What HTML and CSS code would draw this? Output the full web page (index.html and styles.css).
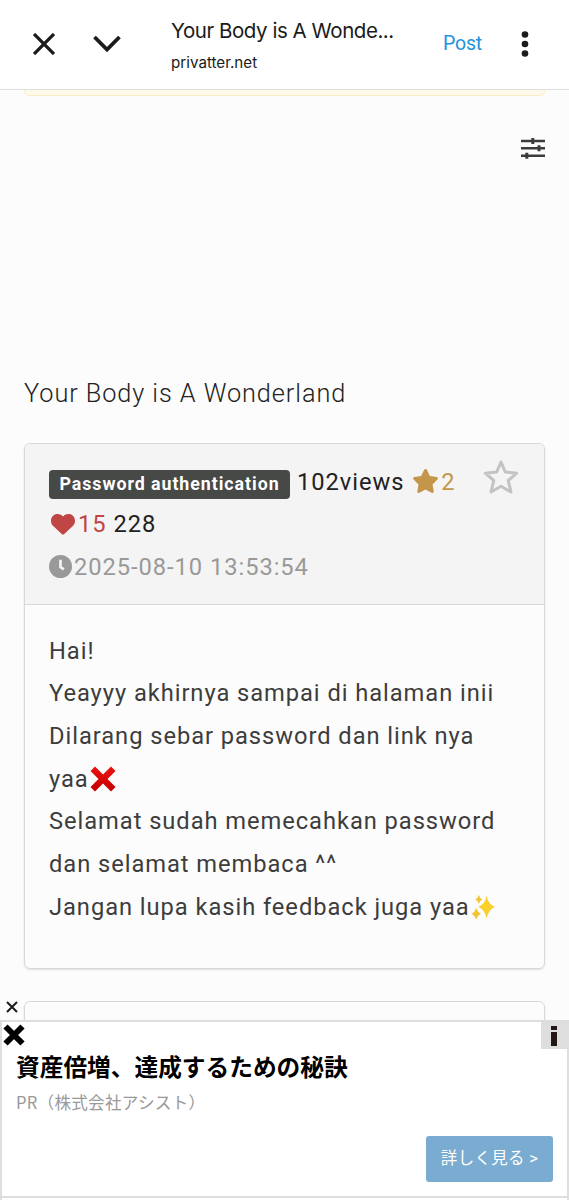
FILE: index.html
```
<!DOCTYPE html>
<html lang="id">
<head>
  <meta charset="UTF-8" />
  <title>Your Body is A Wonderland - privatter.net</title>
  <link rel="stylesheet" href="styles.css">
</head>
<body>
  <header class="browser-bar">
    <svg class="close" viewBox="0 0 22 22"><path d="M1 1L21 21M21 1L1 21" /></svg>
    <svg class="down" viewBox="0 0 28 18"><path d="M1.5 2L14 14.5L26.500 2" /></svg>
    <div class="page-info">
      <div class="page-title">Your Body is A Wonde...</div>
      <div class="page-url">privatter.net</div>
    </div>
    <span class="post">Post</span>
    <svg class="more" viewBox="0 0 8 26"><circle cx="4" cy="3.500" r="3.300" /><circle cx="4" cy="13" r="3.300" /><circle cx="4" cy="22.500" r="3.300" /></svg>
  </header>

  <main>
    <div class="notice"></div>
    <div class="tools">
      <svg class="sliders" viewBox="0 0 24 20"><path d="M0 3H24M0 10.300H24M0 17.700H24" /><path class="knob" d="M11.800 0V6M18 7.300V13.300M5.800 14.700V20.700" /></svg>
    </div>
    <h1>Your Body is A Wonderland</h1>

    <div class="card">
      <div class="card-header">
        <svg class="fav" viewBox="0 0 36 36"><path d="M18 3L22.300 13L33.700 14.200L25.200 21.500L28 33L18 27.300L8 33L10.800 21.500L2.300 14.200L13.700 13Z" /></svg>
        <div class="row"><span class="label">Password authentication</span><span class="views">102views</span><span class="stars"><svg class="star" viewBox="0 0 576 512"><path d="M316.900 18C311.600 7 300.400 0 288.100 0s-23.400 7-28.800 18L195 150.300 51.400 171.500c-12 1.800-22 10.200-25.700 21.700s-.7 24.200 7.900 32.700L137.800 329 113.200 474.700c-2 12 3 24.200 12.900 31.300s23 8 33.800 2.300l128.300-68.500 128.300 68.500c10.800 5.700 23.900 4.900 33.800-2.300s14.900-19.300 12.900-31.300L438.500 329 542.700 225.900c8.600-8.500 11.700-21.200 7.900-32.700s-13.700-19.900-25.700-21.700L381.200 150.300z" /></svg>2</span></div>
        <div class="row"><span class="likes"><svg class="heart" viewBox="0 0 512 512"><path d="M47.600 300.400L228.300 469.100c7.500 7 17.400 10.900 27.700 10.900s20.200-3.900 27.700-10.900L464.400 300.400c30.400-28.300 47.600-68 47.600-109.500v-5.800c0-69.900-50.500-129.500-119.400-141C347 36.500 300.600 51.400 268 84L256 96 244 84c-32.600-32.600-79-47.500-124.600-39.900C50.500 55.600 0 115.200 0 185.100v5.800c0 41.500 17.200 81.200 47.600 109.500z" /></svg>15</span><span>228</span></div>
        <div class="row date"><svg class="clock" viewBox="0 0 24 24"><circle cx="12" cy="12" r="12" /><path d="M12 5V12.500L15.500 15" /></svg>2025-08-10 13:53:54</div>
      </div>
      <div class="card-body">
        Hai!<br>
        Yeayyy akhirnya sampai di halaman inii<br>
        Dilarang sebar password dan link nya<br>
        yaa<svg class="emoji cross" viewBox="0 0 28 28"><defs><linearGradient id="red" x2="0" y2="1"><stop stop-color="#ee1010" /><stop offset="1" stop-color="#c20000" /></linearGradient></defs><path fill="url(#red)" d="M6 1.500L14 9.500L22 1.500L26.500 6L18.500 14L26.500 22L22 26.500L14 18.500L6 26.500L1.500 22L9.500 14L1.500 6Z" /></svg><br>
        Selamat sudah memecahkan password<br>
        dan selamat membaca ^^<br>
        Jangan lupa kasih feedback juga yaa<svg class="emoji sparkles" viewBox="0 0 24 24"><path fill="#fad02c" d="M15 1Q16.800 9.300 23 11.500Q16.800 13.700 15 22.500Q13.200 13.700 7 11.500Q13.200 9.300 15 1Z" /><path fill="#f3c433" d="M7.500 0Q8.500 3.300 11 4.300Q8.500 5.300 7.500 8.500Q6.500 5.300 4 4.300Q6.500 3.300 7.500 0ZM5 12.500Q6.400 16.600 9.500 18Q6.400 19.400 5 23.500Q3.600 19.400 .5 18Q3.600 16.600 5 12.500Z" /></svg>
      </div>
    </div>
    <div class="card next"></div>
  </main>

  <svg class="ad-dismiss" viewBox="0 0 12 12"><path d="M1 1L11 11M11 1L1 11" /></svg>
  <aside class="ad">
    <svg class="ad-close" viewBox="0 0 22 22"><path d="M2.500 2.500L19.500 19.500M19.500 2.500L2.500 19.500" /></svg>
    <div class="ad-info"><svg viewBox="0 0 6 20"><path d="M0 0H6V4H0ZM0 6H6V20H0Z" /></svg></div>
    <div class="ad-title">資産倍増、達成するための秘訣</div>
    <div class="ad-pr">PR（株式会社アシスト）</div>
    <a class="ad-button">詳しく見る &gt;</a>
  </aside>
</body>
</html>
```
FILE: styles.css
```
* {
  box-sizing: border-box;
}
body {
  margin: 0;
  height: 1200px;
  overflow: hidden;
  background: #fcfcfc;
  color: #222;
  font-family: Roboto, "Noto Sans CJK JP", sans-serif;
}
svg {
  display: block;
  flex: none;
}
.browser-bar {
  display: flex;
  align-items: center;
  height: 90px;
  padding: 0 40px 1px 33px;
  background: #fff;
  border-bottom: 1px solid #dcdfe0;
}
.close, .down, .ad-dismiss, .ad-close {
  fill: none;
  stroke: #1b1b1b;
  stroke-width: 3.3;
}
.close {
  width: 22px;
  height: 22px;
}
.down {
  width: 28px;
  height: 18px;
  margin-left: 38px;
  stroke-width: 3.8;
}
.page-info {
  width: 272px;
  margin-left: 50px;
  font-family: Inter, sans-serif;
  color: #1b1b1b;
  white-space: nowrap;
}
.page-title {
  font-size: 20.5px;
  line-height: 32px;
  letter-spacing: -0.45px;
}
.page-url {
  font-size: 15.2px;
  line-height: 20px;
  margin-top: 6px;
}
.post {
  width: 77px;
  color: #2492dc;
  font-size: 19.5px;
  letter-spacing: -0.2px;
  position: relative;
  top: -1px;
}
.more {
  width: 8px;
  height: 26px;
  margin-left: 1px;
  fill: #1b1b1b;
}
main {
  padding: 0 24px;
}
.notice {
  height: 6px;
  background: #fff9ea;
  border: 1px solid #fbecc8;
  border-top: 0;
  border-radius: 0 0 5px 5px;
}
.tools {
  display: flex;
  justify-content: flex-end;
  height: 278px;
  padding-top: 42px;
}
.sliders {
  width: 24px;
  height: 20px;
  overflow: visible;
  fill: none;
  stroke: #3c3c3c;
  stroke-width: 2.4;
}
.knob {
  stroke-width: 3;
}
h1 {
  margin: 0 0 29px;
  font-size: 25.3px;
  line-height: 40px;
  font-weight: 300;
  letter-spacing: 0.93px;
}
.card {
  border: 1px solid #d8d8d8;
  border-radius: 6px;
  box-shadow: 0 1px 2px rgba(0,0,0,0.12);
  overflow: hidden;
  font-size: 23.7px;
  line-height: 42.7px;
  letter-spacing: 0.95px;
}
.card-header {
  position: relative;
  height: 161px;
  padding: 16.5px 24px;
  background: #f4f4f4;
  border-bottom: 1px solid #d8d8d8;
}
.row {
  display: flex;
  align-items: center;
  gap: 7px;
  height: 42.7px;
  white-space: nowrap;
}
.label {
  width: 241px;
  height: 29px;
  margin-top: 5px;
  border-radius: 4px;
  background: #474947;
  color: #fff;
  font-size: 17.8px;
  font-weight: bold;
  line-height: 27px;
  text-align: center;
}
.stars, .likes {
  display: flex;
  align-items: center;
}
.stars {
  color: #c4964b;
}
.likes {
  color: #c04646;
}
.star {
  width: 27px;
  height: 24px;
  margin: 0 2px 2px 1px;
  fill: currentColor;
}
.heart {
  width: 24px;
  height: 24px;
  margin: 0 3px 2px 2px;
  fill: currentColor;
}
.date {
  gap: 2px;
  color: #999;
}
.clock {
  width: 23px;
  height: 23px;
  margin-bottom: 1px;
  fill: #999;
}
.clock path {
  fill: none;
  stroke: #f4f4f4;
  stroke-width: 2.8;
}
.fav {
  position: absolute;
  top: 15px;
  right: 25px;
  width: 36px;
  height: 36px;
  fill: none;
  stroke: #c3c3c3;
  stroke-width: 3;
  stroke-linejoin: round;
}
.card-body {
  height: 363px;
  padding: 24.6px 24px;
  color: #3d3d3d;
  white-space: nowrap;
}
.emoji {
  display: inline-block;
}
.cross {
  width: 28px;
  height: 28px;
  vertical-align: -6px;
}
.sparkles {
  width: 25px;
  height: 25px;
  margin-left: 1px;
  vertical-align: -5px;
}
.next {
  height: 60px;
  margin-top: 32px;
}
.ad-dismiss {
  position: absolute;
  left: 6px;
  top: 1001px;
  width: 12px;
  height: 12px;
  stroke-width: 2;
}
.ad {
  position: fixed;
  left: 0;
  right: 0;
  bottom: 0;
  height: 180px;
  padding: 28px 14px;
  border: 2px solid #dedede;
  border-bottom: 0;
  background: linear-gradient(#dedede, #dedede) 0 174px / 100% 2px no-repeat #fff;
}
.ad-close {
  position: absolute;
  left: 1px;
  top: 2px;
  width: 22px;
  height: 22px;
  stroke: #000;
  stroke-width: 6;
}
.ad-info {
  position: absolute;
  right: -2px;
  top: -1px;
  width: 28px;
  height: 28px;
  padding: 5px 0 0 10px;
  background: #dedede;
}
.ad-info svg {
  width: 6px;
  height: 20px;
  fill: #231815;
}
.ad-title {
  font-size: 23.7px;
  line-height: 36px;
  font-weight: bold;
  color: #000;
}
.ad-pr {
  margin-top: 2px;
  font-size: 16.6px;
  line-height: 28px;
  font-family: "Noto Sans CJK JP", sans-serif;
  letter-spacing: 0.25px;
  color: #999;
}
.ad-button {
  display: block;
  width: 127px;
  height: 46px;
  margin: 20px 0 0 auto;
  border-radius: 3px;
  background: #7aabd1;
  color: #fff;
  font-size: 16.5px;
  line-height: 46px;
  letter-spacing: 0.3px;
  text-align: center;
}
```
